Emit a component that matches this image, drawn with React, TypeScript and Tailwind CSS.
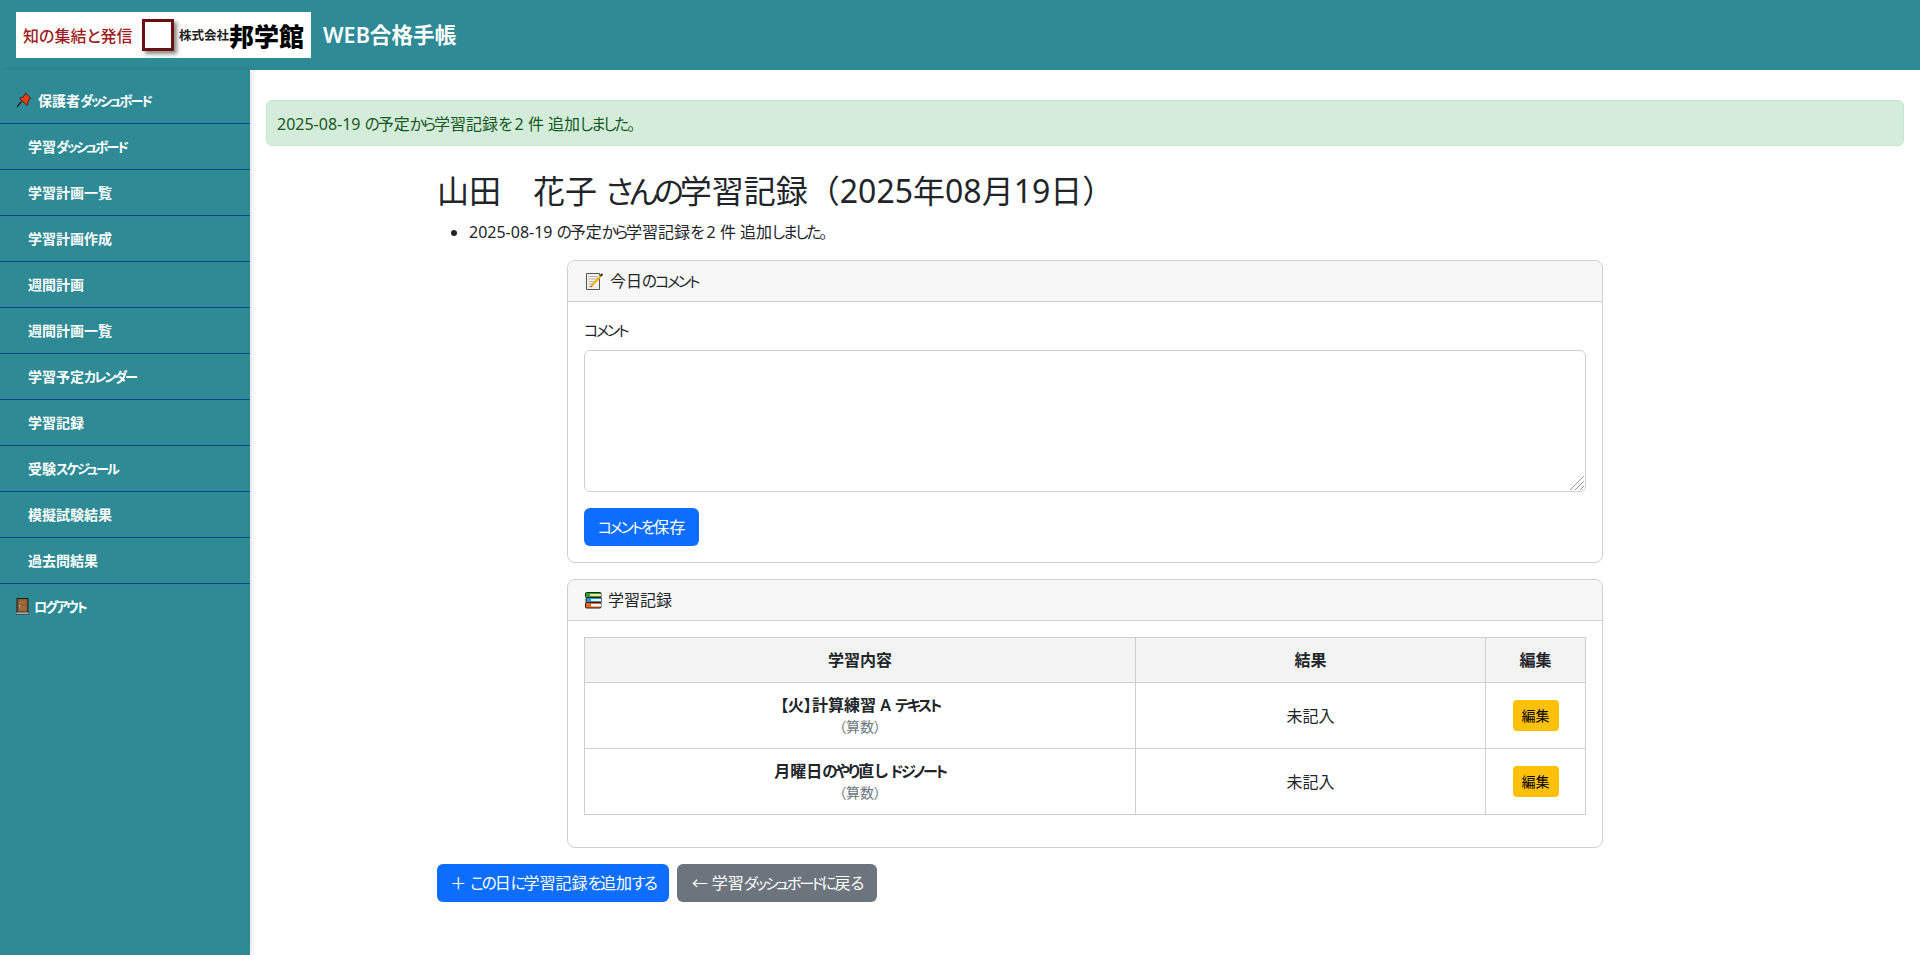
const menuItems = ['学習ダッシュボード', '学習計画一覧', '学習計画作成', '週間計画', '週間計画一覧', '学習予定カレンダー', '学習記録', '受験スケジュール', '模擬試験結果', '過去問結果'];

const records = [
  { title: '【火】計算練習 A テキスト', subject: '（算数）' },
  { title: '月曜日のやり直し ドジノート', subject: '（算数）' },
];

// the kana in the reference are narrower than the kanji, so shrink and tighten only those runs
function Jp({ text }: { text: string }) {
  const parts = text.split(/([\u3040-\u309f]+|[\u30a0-\u30ff]+)/);
  return (
    <>
      {parts.map((part, i) => {
        if (i % 2 === 0) return <span key={i}>{part}</span>;
        const isKatakana = /[\u30a0-\u30ff]/.test(part);
        return <span key={i} className={isKatakana ? 'text-[0.94em] leading-none tracking-[-0.15em]' : 'text-[0.97em] leading-none tracking-[-0.13em]'}>{part}</span>;
      })}
    </>
  );
}

function PinIcon() {
  return (
    <svg width="16" height="16" viewBox="0 0 16 16" className="shrink-0">
      <path d="M1 15l4.5-5.5" stroke="#222" strokeWidth="1.4" />
      <path d="M9.5 1l5.5 5.4-1.6.7-1.7 3.5.4 1.6-1.4 1.1-6.9-6.8 1.1-1.3 1.6.3L8.9 2.7z" fill="#ee3a10" stroke="#3a1208" strokeWidth="0.8" />
    </svg>
  );
}

function DoorIcon() {
  return (
    <svg width="13" height="17" viewBox="0 0 13 17" className="shrink-0">
      <rect x="1" y="0.5" width="11" height="14" fill="#8a5a32" stroke="#1c1c1c" />
      <rect x="3" y="2.5" width="7" height="4" fill="#a06c3e" />
      <rect x="3" y="8" width="7" height="5" fill="#a06c3e" />
      <rect x="3" y="7" width="1.4" height="1.4" fill="#e8c050" />
      <rect x="0" y="14" width="13" height="2.5" fill="#a8a8a8" stroke="#222" strokeWidth="0.6" />
    </svg>
  );
}

function MemoIcon() {
  return (
    <svg width="19" height="19" viewBox="0 0 19 19" className="shrink-0">
      <path d="M1.5 1.5h13v16h-13z" fill="#f4f2ea" stroke="#555" />
      <path d="M3.5 4.5h9M3.5 7h9M3.5 9.5h7M3.5 12h5M3.5 14.5h4" stroke="#b5b5b5" />
      <path d="M6 14.5L16.5 3" stroke="#f0b020" strokeWidth="2.2" />
      <path d="M15.5 4L17.5 1.8" stroke="#333" strokeWidth="2" />
      <path d="M6.5 14l-1.2 1.6 1.9-.8z" fill="#333" />
    </svg>
  );
}

function BooksIcon() {
  return (
    <svg width="17" height="17" viewBox="0 0 17 17" className="shrink-0">
      <rect x="0.5" y="0.5" width="15.5" height="5" rx="1" fill="#2aa52a" stroke="#222" />
      <rect x="5" y="2" width="11" height="2" fill="#f0e9a0" />
      <rect x="1" y="5.5" width="15.5" height="5" rx="1" fill="#3a8ed8" stroke="#222" />
      <rect x="6" y="7" width="10.5" height="2" fill="#f3f3f3" />
      <rect x="0.5" y="10.5" width="15.5" height="5.5" rx="1" fill="#ef6a1a" stroke="#222" />
      <rect x="6" y="12" width="10" height="2.5" fill="#f6f6f6" />
    </svg>
  );
}

function Logo() {
  return (
    <div className="flex h-[46px] w-[295px] items-center bg-white pl-[7px] font-['Noto_Sans_CJK_JP',sans-serif]">
      <span className="w-[119px] whitespace-nowrap text-[16px] font-medium leading-none text-[#a01c22]">知の集結と発信</span>
      <div className="h-[32px] w-[32px] border-[3px] border-[#6b0f14] bg-white shadow-[3px_3px_4px_#888]" />
      <span className="ml-[5px] whitespace-nowrap text-[12.5px] font-bold leading-none text-[#222]">株式会社</span>
      <span className="whitespace-nowrap text-[25px] font-black leading-none text-black">邦学館</span>
    </div>
  );
}

export default function App() {
  return (
    <div className="flex min-h-[955px] flex-col bg-white font-['Noto_Sans','Noto_Sans_CJK_JP',sans-serif] text-[16px] text-[#212529] [font-feature-settings:'palt']">
      <header className="flex h-[70px] items-center gap-3 bg-[#2e8a94] pl-4">
        <Logo />
        <h1 className="text-[21.6px] font-semibold text-white">WEB合格手帳</h1>
      </header>

      <div className="flex flex-1">
        <aside className="w-[250px] shrink-0 bg-[#2e8a94] pt-2 text-[14px] font-bold text-white shadow-[2px_0_5px_rgba(0,0,0,0.12)]">
          <div className="flex h-[46px] items-center gap-[6px] border-b border-[#0b4680] pb-[1px] pl-4">
            <PinIcon />
            <span><Jp text="保護者ダッシュボード" /></span>
          </div>
          {menuItems.map(item => (
            <div key={item} className="flex h-[46px] items-center border-b border-[#0b4680] pb-[1px] pl-7">
              <span><Jp text={item} /></span>
            </div>
          ))}
          <div className="flex h-[46px] items-center gap-[5px] pb-[1px] pl-4">
            <DoorIcon />
            <span><Jp text="ログアウト" /></span>
          </div>
        </aside>

        <main className="flex-1 px-4 pt-[30px]">
          <div className="flex h-[46px] items-center rounded-md border border-[#c3e6cb] bg-[#d4edda] px-[10px] pt-[1px] text-[#155724]">
            <span><Jp text="2025-08-19 の予定から学習記録を 2 件 追加しました。" /></span>
          </div>

          <div className="ml-[171px] w-[1196px]">
            <h2 className="mt-[26px] text-[32px] font-normal leading-[38px]">
              <Jp text="山田　花子 さんの学習記録" />
              <span className="[font-feature-settings:normal]">（</span>
              2025年08月19日
              <span className="[font-feature-settings:normal]">）</span>
            </h2>
            <ul className="mt-[11px] list-disc pl-8">
              <li className="h-[22px] leading-[22px]"><Jp text="2025-08-19 の予定から学習記録を 2 件 追加しました。" /></li>
            </ul>

            <div className="ml-[130px] mt-[17px] w-[1036px]">
              <section className="h-[303px] rounded-lg border border-[#cfcfcf]">
                <div className="flex h-[41px] items-center gap-[6px] rounded-t-lg border-b border-[#cfcfcf] bg-[#f7f7f7] pl-[17px]">
                  <MemoIcon />
                  <span><Jp text="今日のコメント" /></span>
                </div>
                <div className="px-4 pt-[17px]">
                  <label className="block h-[22px] leading-[22px]"><Jp text="コメント" /></label>
                  <div className="relative mt-[9px]">
                    <textarea className="block h-[142px] w-full resize-none rounded-md border border-[#cfcfcf] bg-white" />
                    <svg width="14" height="14" viewBox="0 0 14 14" className="absolute bottom-[2px] right-[2px]">
                      <path d="M0 14L14 0M5 14L14 5M10 14L14 10" stroke="#999" strokeWidth="1" />
                    </svg>
                  </div>
                  <button className="mt-[16px] h-[38px] w-[115px] rounded-md bg-[#0d6efd] text-white"><Jp text="コメントを保存" /></button>
                </div>
              </section>

              <section className="mt-[16px] h-[269px] rounded-lg border border-[#cfcfcf]">
                <div className="flex h-[41px] items-center gap-[6px] rounded-t-lg border-b border-[#cfcfcf] bg-[#f7f7f7] pl-[17px]">
                  <BooksIcon />
                  <span><Jp text="学習記録" /></span>
                </div>
                <div className="px-4 pt-[16px]">
                  <table className="w-full table-fixed border-collapse text-center">
                    <thead>
                      <tr className="h-[45px] bg-[#f3f3f3] font-bold">
                        <th className="w-[551px] border border-[#cfcfcf]">学習内容</th>
                        <th className="w-[350px] border border-[#cfcfcf]">結果</th>
                        <th className="border border-[#cfcfcf]">編集</th>
                      </tr>
                    </thead>
                    <tbody>
                      {records.map(rec => (
                        <tr key={rec.title} className="h-[66px]">
                          <td className="border border-[#cfcfcf]">
                            <div className="h-[22px] font-semibold leading-[22px]"><Jp text={rec.title} /></div>
                            <div className="text-[14px] leading-[22px] text-[#6c757d]">{rec.subject}</div>
                          </td>
                          <td className="border border-[#cfcfcf]">未記入</td>
                          <td className="border border-[#cfcfcf]">
                            <button className="h-[31px] w-[46px] rounded bg-[#ffc107] text-[14px] text-black">編集</button>
                          </td>
                        </tr>
                      ))}
                    </tbody>
                  </table>
                </div>
              </section>
            </div>

            <div className="mt-[16px] flex gap-2">
              <button className="h-[38px] w-[232px] rounded-md bg-[#0d6efd] pb-[1px] text-white"><Jp text="＋ この日に学習記録を追加する" /></button>
              <button className="h-[38px] w-[200px] rounded-md bg-[#6c757d] pb-[1px] text-white"><Jp text="← 学習ダッシュボードに戻る" /></button>
            </div>
          </div>
        </main>
      </div>
    </div>
  );
}
